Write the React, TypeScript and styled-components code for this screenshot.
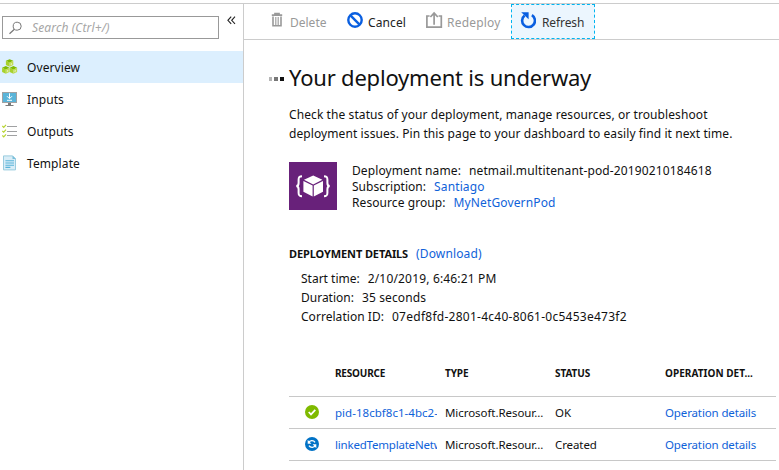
import React from 'react';
import styled, { createGlobalStyle, css } from 'styled-components';

const GlobalStyle = createGlobalStyle`
  * { box-sizing: border-box; }
  body {
    margin: 0;
    background: #fff;
    color: #111;
    font-family: "Noto Sans", "Open Sans", sans-serif;
    font-size: 12px;
    overflow: hidden;
  }
`;

const Page = styled.div`
  display: flex;
  width: 779px;
  height: 467px;
  margin-top: 3px;
  border-top: 1px solid #ccc;
`;

const Sidebar = styled.aside`
  flex: 0 0 244px;
  border-right: 1px solid #ccc;
`;

const SearchBar = styled.div`
  display: flex;
  height: 47px;
  padding: 12px 0 0 2px;
`;

const SearchBox = styled.div`
  display: flex;
  align-items: center;
  width: 217px;
  height: 23px;
  padding-left: 6px;
  border: 1px solid #999;
`;

const Placeholder = styled.span`
  margin-left: 9px;
  color: #a6a6a6;
  font-style: italic;
  letter-spacing: 0.12px;
  line-height: 21px;
`;

const Collapse = styled.div`
  display: flex;
  margin: -4px 0 0 8px;
  padding-top: 4px;
`;

const MenuItem = styled.div<{ $selected?: boolean }>`
  display: flex;
  align-items: center;
  gap: 9px;
  height: 32px;
  padding-left: 2px;
  background: ${(p) => (p.$selected ? '#dceffe' : 'transparent')};
  letter-spacing: 0.1px;
`;

const MenuLabel = styled.span`
  padding-top: 2px;
  line-height: 30px;
`;

const Main = styled.main`
  flex: 1;
  min-width: 0;
`;

const Toolbar = styled.div`
  display: flex;
  height: 36px;
  padding-left: 18px;
  border-bottom: 1px solid #ccc;
`;

const ToolButton = styled.div<{ $width: number; $muted?: boolean; $focused?: boolean; $gap: number; $track?: number }>`
  display: flex;
  gap: ${(p) => p.$gap}px;
  width: ${(p) => p.$width}px;
  height: 35px;
  padding: 6px 0 0 9px;
  color: ${(p) => (p.$muted ? '#999' : '#222')};
  line-height: 25px;
  letter-spacing: ${(p) => p.$track ?? 0}px;
  ${(p) =>
    p.$focused &&
    css`
      padding: 5px 0 0 8px;
      border: 1px dashed #00b4f0;
      background: #ecf6fe;
      color: #333;
    `}
`;

const Content = styled.div`
  padding: 21px 3px 0 45px;
`;

const Heading = styled.header`
  display: flex;
  align-items: center;
  gap: 5px;
  height: 32px;
  margin-left: -20px;
`;

const Progress = styled.div`
  display: flex;
  gap: 2px;
  padding-top: 4px;
`;

const Dot = styled.i<{ $tone: string; $size: number }>`
  width: ${(p) => p.$size}px;
  height: 4px;
  background: ${(p) => p.$tone};
`;

const Title = styled.h1`
  margin: 0;
  font-size: 22px;
  font-weight: 400;
  line-height: 32px;
  letter-spacing: -0.2px;
  white-space: nowrap;
`;

const Intro = styled.p`
  margin: 12px 0 0;
  line-height: 19px;
  letter-spacing: 0.09px;
  white-space: nowrap;
`;

const Summary = styled.section`
  display: flex;
  gap: 15px;
  height: 48px;
  margin-top: 19px;
`;

const SummaryFields = styled.div`
  padding-top: 1px;
  line-height: 16px;
`;

const DetailFields = styled.div`
  margin-top: 6px;
  padding-left: 12px;
  line-height: 19px;
`;

const Field = styled.div`
  display: flex;
  gap: 8px;
  white-space: nowrap;
`;

const Label = styled.span<{ $track?: number }>`
  letter-spacing: ${(p) => p.$track ?? 0}px;
`;

const Value = styled.span<{ $track?: number }>`
  letter-spacing: ${(p) => p.$track ?? 0.13}px;
`;

const Link = styled.a<{ $track?: number }>`
  color: #0f62d9;
  letter-spacing: ${(p) => p.$track ?? 0.13}px;
`;

const DetailsHeading = styled.div`
  display: flex;
  gap: 8px;
  margin-top: 34px;
  line-height: 19px;
`;

const SectionTitle = styled.strong`
  font-size: 11px;
  letter-spacing: -0.11px;
`;

const Table = styled.div`
  margin-top: 25px;
`;

const Row = styled.div`
  display: grid;
  grid-template-columns: 46px repeat(4, 110px);
  align-items: center;
  height: 32px;
  border-bottom: 1px solid #c8c8c8;
`;

const HeadRow = styled(Row)`
  height: 46px;
  padding-bottom: 2px;
  font-size: 10px;
  font-weight: 700;
`;

const Cell = styled.div<{ $track?: number }>`
  width: 102px;
  overflow: hidden;
  font-size: 11.5px;
  letter-spacing: ${(p) => p.$track ?? -0.1}px;
  line-height: 20px;
  white-space: nowrap;
`;

const HeadCell = styled.div<{ $track?: number }>`
  letter-spacing: ${(p) => p.$track ?? -0.1}px;
  white-space: nowrap;
`;

const StatusCell = styled.div`
  display: flex;
  padding: 0 0 1px 16px;
`;

const SearchIcon = () => (
  <svg width="14" height="14" viewBox="0 0 14 14" fill="none" stroke="#777" strokeWidth="1">
    <circle cx="8.2" cy="5.2" r="4" />
    <path d="M5.4 8.2.5 12.8" strokeWidth="1.2" />
  </svg>
);

const ChevronsIcon = () => (
  <svg width="9" height="9" viewBox="0 0 9 9" fill="none" stroke="#222" strokeWidth="1.1">
    <path d="M4.2.7.9 4.3l3.3 3.6M8 .7 4.7 4.3 8 7.9" />
  </svg>
);

const Cube = ({ x, y }: { x: number; y: number }) => (
  <g transform={`translate(${x} ${y}) scale(1.06 1.04)`}>
    <path d="M3.5 0 7 1.6 3.5 3.4 0 1.6Z" fill="#7fba00" />
    <path d="M0 1.6 3.5 3.2V7.3L0 5.6Z" fill="#a8d12c" />
    <path d="M7 1.6 3.5 3.2V7.3L7 5.6Z" fill="#bfdc50" />
    <path d="M5.8 3.6 4.5 4.2v1.5l1.3-.6Z" fill="#e4f1b8" />
  </g>
);

const OverviewIcon = () => (
  <svg width="16" height="16" viewBox="0 0 16 16">
    <Cube x={3.9} y={0.2} />
    <Cube x={0.1} y={7.1} />
    <Cube x={7.7} y={7.1} />
  </svg>
);

const InputsIcon = () => (
  <svg width="16" height="16" viewBox="0 0 16 16">
    <path d="M0 1h15v11H0Z" fill="#a0a1a2" />
    <path d="M1 2h13v9H1Z" fill="#59b4d9" />
    <path d="M6 12h3v2h2.5v1h-8v-1H6Z" fill="#7a7a7a" />
    <path d="M7.5 2.3v5M5 5.2l2.5 2.5L10 5.2M5 9.3h5" stroke="#fff" strokeWidth="1" fill="none" />
  </svg>
);

const OutputsIcon = () => (
  <svg width="16" height="16" viewBox="0 0 16 16" fill="none">
    <path d="M5 3.5h10M5 8.5h10M5 12.5h10" stroke="#a0a1a2" strokeWidth="1" />
    <path d="m.3 3 1.4 1.3L4 1.8M.3 7.9l1.4 1.3L4 6.7M.3 12.5l1.4 1.3L4 11.3" stroke="#b8d432" strokeWidth="1.2" />
  </svg>
);

const TemplateIcon = () => (
  <svg width="16" height="16" viewBox="0 0 16 16">
    <path d="M1.5.9h9l3 3v11h-12Z" fill="#d9edf7" stroke="#9accdf" strokeWidth="1" />
    <path d="M10.5.5 14 4h-3.5Z" fill="#7abfda" />
    <path d="M3.4 5.8H12M3.4 8H12M3.4 10.2H12M3.4 12.4h5" stroke="#59b4d9" strokeWidth="1.1" />
  </svg>
);

const DeleteIcon = () => (
  <svg width="12" height="18" viewBox="0 0 12 18" fill="none" stroke="#999">
    <path d="M.8 5.2h10.4M4 4.4V3.5h4v.9" strokeWidth="1.7" />
    <path d="M2 6.5v9.3h8V6.5" strokeWidth="1.6" />
    <path d="M4.5 7v8M6 7v8M7.5 7v8" strokeWidth=".75" />
  </svg>
);

const CancelIcon = () => (
  <svg width="16" height="19" viewBox="0 0 16 19" fill="none" stroke="#0a5fe0" strokeWidth="2.4">
    <circle cx="8" cy="10" r="6.7" />
    <path d="m3.4 5.4 9.2 9.2" />
  </svg>
);

const RedeployIcon = () => (
  <svg width="17" height="19" viewBox="0 0 17 19" fill="none" stroke="#999" strokeWidth="1.7">
    <path d="M3.6 6H.9v11.1h14.4V6h-2.7" />
    <path d="M8.1 14.8V3.6M4.4 7l3.7-3.9L11.8 7" />
  </svg>
);

const RefreshIcon = () => (
  <svg width="16" height="20" viewBox="0 0 16 20">
    <path d="M11.9 5.2A6.4 6.4 0 1 1 4.6 5.6" fill="none" stroke="#0a5fe0" strokeWidth="2.6" />
    <path d="M1.2 2.3h7.4v6.9Z" fill="#0a5fe0" />
  </svg>
);

const DeploymentLogo = () => (
  <svg width="48" height="48" viewBox="0 0 48 48">
    <path d="M0 0h48v48H0Z" fill="#68217a" />
    <path
      d="M13 14.3c-3 0-3.4 1-3.4 3.4v3.2c0 2-.8 3-2.2 3.2 1.4.2 2.2 1.2 2.2 3.2v3.5c0 2.4.5 3.4 3.4 3.4M35 14.3c3 0 3.4 1 3.4 3.4v3.2c0 2 .8 3 2.2 3.2-1.4.2-2.2 1.2-2.2 3.2v3.5c0 2.4-.5 3.4-3.4 3.4"
      fill="none"
      stroke="#fff"
      strokeWidth="2"
    />
    <path d="m24.2 13.6 9.2 4.2-9.2 4.6-9.2-4.6ZM14.4 19.1l9.2 4.5v11l-9.2-4.9ZM34 19.1l-9.2 4.5v11l9.2-4.9Z" fill="#fff" />
  </svg>
);

const SuccessIcon = () => (
  <svg width="14" height="14" viewBox="0 0 14 14">
    <circle cx="7" cy="7" r="7" fill="#7fba00" />
    <path d="m3.7 7 2.3 2.4 4.3-4.6" fill="none" stroke="#fff" strokeWidth="1.7" />
  </svg>
);

const SyncIcon = () => (
  <svg width="14" height="14" viewBox="0 0 14 14">
    <circle cx="7" cy="7" r="7" fill="#0072c6" />
    <path d="M3.6 5.7C4.8 3.2 8.4 2.9 10 5.3M10.4 8.3C9.2 10.8 5.6 11.1 4 8.7" fill="none" stroke="#fff" strokeWidth="1.4" />
    <path d="M2.7 2.8v3.9h3.7ZM11.3 11.2V7.3H7.6Z" fill="#fff" />
  </svg>
);

const menu = [
  { label: 'Overview', icon: <OverviewIcon />, selected: true },
  { label: 'Inputs', icon: <InputsIcon /> },
  { label: 'Outputs', icon: <OutputsIcon /> },
  { label: 'Template', icon: <TemplateIcon /> },
];

const resources = [
  { icon: <SuccessIcon />, name: 'pid-18cbf8c1-4bc2-', track: 0.03, status: 'OK' },
  { icon: <SyncIcon />, name: 'linkedTemplateNetw', track: -0.2, status: 'Created' },
];

export default function App() {
  return (
    <>
      <GlobalStyle />
      <Page>
        <Sidebar>
          <SearchBar>
            <SearchBox>
              <SearchIcon />
              <Placeholder>Search (Ctrl+/)</Placeholder>
            </SearchBox>
            <Collapse>
              <ChevronsIcon />
            </Collapse>
          </SearchBar>
          {menu.map((item) => (
            <MenuItem key={item.label} $selected={item.selected}>
              {item.icon}
              <MenuLabel>{item.label}</MenuLabel>
            </MenuItem>
          ))}
        </Sidebar>
        <Main>
          <Toolbar>
            <ToolButton $width={76} $gap={7} $muted>
              <DeleteIcon />
              Delete
            </ToolButton>
            <ToolButton $width={79} $gap={5} $track={0.1}>
              <CancelIcon />
              Cancel
            </ToolButton>
            <ToolButton $width={94} $gap={4} $track={0.2} $muted>
              <RedeployIcon />
              Redeploy
            </ToolButton>
            <ToolButton $width={84} $gap={6} $track={-0.1} $focused>
              <RefreshIcon />
              Refresh
            </ToolButton>
          </Toolbar>
          <Content>
            <Heading>
              <Progress>
                <Dot $tone="#b5b5b5" $size={3} />
                <Dot $tone="#777" $size={4} />
                <Dot $tone="#111" $size={4} />
              </Progress>
              <Title>Your deployment is underway</Title>
            </Heading>
            <Intro>
              Check the status of your deployment, manage resources, or troubleshoot
              <br />
              deployment issues. Pin this page to your dashboard to easily find it next time.
            </Intro>
            <Summary>
              <DeploymentLogo />
              <SummaryFields>
                <Field>
                  <Label $track={0.1}>Deployment name:</Label>
                  <Value>netmail.multitenant-pod-20190210184618</Value>
                </Field>
                <Field>
                  <Label $track={0.03}>Subscription:</Label>
                  <Link>Santiago</Link>
                </Field>
                <Field>
                  <Label $track={0.08}>Resource group:</Label>
                  <Link>MyNetGovernPod</Link>
                </Field>
              </SummaryFields>
            </Summary>
            <DetailsHeading>
              <SectionTitle>DEPLOYMENT DETAILS</SectionTitle>
              <Link>(Download)</Link>
            </DetailsHeading>
            <DetailFields>
              <Field>
                <Label>Start time:</Label>
                <Value $track={0.17}>2/10/2019, 6:46:21 PM</Value>
              </Field>
              <Field>
                <Label>Duration:</Label>
                <Value>35 seconds</Value>
              </Field>
              <Field>
                <Label $track={0.04}>Correlation ID:</Label>
                <Value $track={0.26}>07edf8fd-2801-4c40-8061-0c5453e473f2</Value>
              </Field>
            </DetailFields>
            <Table>
              <HeadRow>
                <span />
                <HeadCell $track={-0.2}>RESOURCE</HeadCell>
                <HeadCell>TYPE</HeadCell>
                <HeadCell>STATUS</HeadCell>
                <HeadCell $track={0.04}>OPERATION DET...</HeadCell>
              </HeadRow>
              {resources.map((r) => (
                <Row key={r.name}>
                  <StatusCell>{r.icon}</StatusCell>
                  <Cell>
                    <Link $track={r.track}>{r.name}</Link>
                  </Cell>
                  <Cell $track={-0.06}>Microsoft.Resour...</Cell>
                  <Cell>{r.status}</Cell>
                  <Cell>
                    <Link $track={-0.13}>Operation details</Link>
                  </Cell>
                </Row>
              ))}
            </Table>
          </Content>
        </Main>
      </Page>
    </>
  );
}
